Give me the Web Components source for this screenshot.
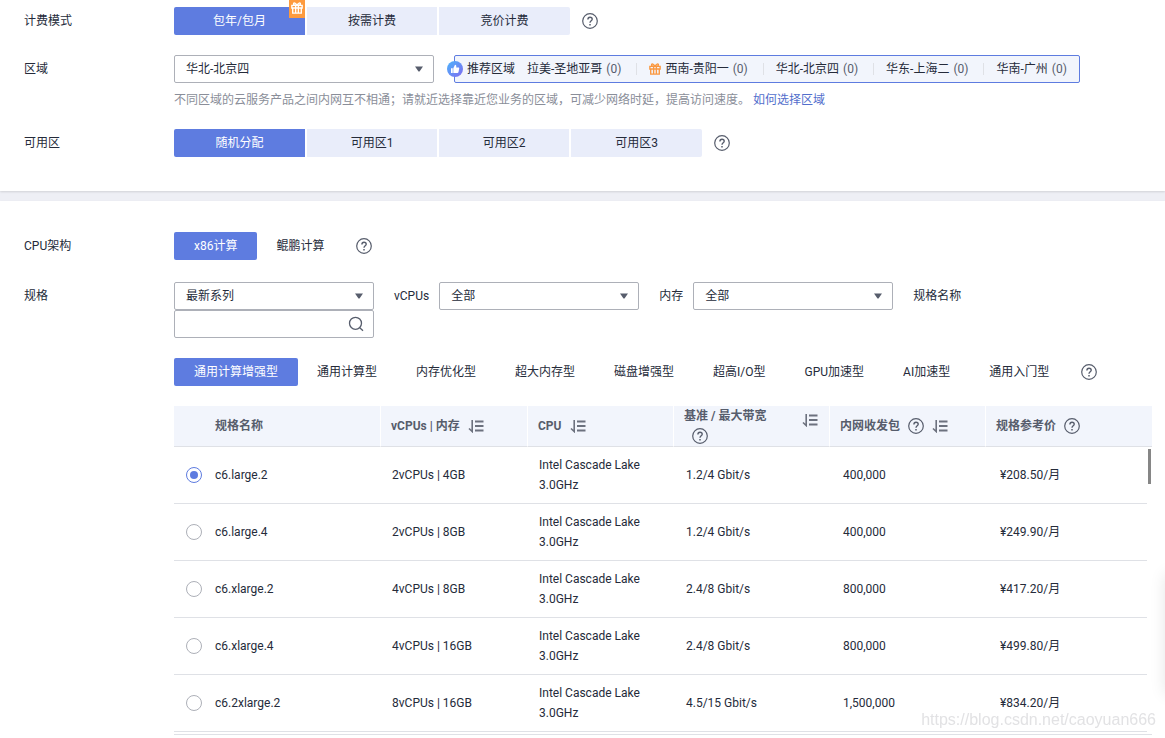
<!DOCTYPE html>
<html lang="zh-CN">
<head>
<meta charset="utf-8">
<meta name="viewport" content="width=device-width, initial-scale=1">
<title>购买弹性云服务器</title>
<style>
    :root {
        --brand: #5e7ce0;
        --text: #252b3a;
        --text-weak: #575d6c;
        --border: #adb0b8;
        --line: #dfe1e6;
        --tint: #f2f5fc;
    }
    body {
        margin: 0;
        background: #eeeff5;
        color: var(--text);
        font: 12px/20px Roboto, "Noto Sans CJK SC", sans-serif;
    }
    .line { display: flex; align-items: center; flex-wrap: wrap; }
    .hint { margin: 8px 0 0; line-height: 18px; color: #8a8e99; }
    .hint a { color: #526ecc; text-decoration: none; }
</style>
</head>
<body>

<page-section class="basic">
    <form-row label="计费模式">
        <div class="line">
            <button-group label="计费模式" items="包年/包月,按需计费,竞价计费" gift></button-group>
            <help-tip></help-tip>
        </div>
    </form-row>
    <form-row label="区域">
        <div class="line" style="gap: 0 20px">
            <select-box name="区域" value="华北-北京四" style="--width: 260px"></select-box>
            <region-bar>
                <region-link count="0">拉美-圣地亚哥</region-link>
                <region-link count="0" gift>西南-贵阳一</region-link>
                <region-link count="0">华北-北京四</region-link>
                <region-link count="0">华东-上海二</region-link>
                <region-link count="0">华南-广州</region-link>
            </region-bar>
        </div>
        <p class="hint">不同区域的云服务产品之间内网互不相通；请就近选择靠近您业务的区域，可减少网络时延，提高访问速度。 <a href="#region">如何选择区域</a></p>
    </form-row>
    <form-row label="可用区">
        <div class="line">
            <button-group label="可用区" items="随机分配,可用区1,可用区2,可用区3"></button-group>
            <help-tip></help-tip>
        </div>
    </form-row>
</page-section>

<page-section class="spec">
    <form-row label="CPU架构">
        <div class="line">
            <tab-group label="CPU架构" items="x86计算,鲲鹏计算"></tab-group>
            <help-tip></help-tip>
        </div>
    </form-row>
    <form-row label="规格">
        <div class="line" style="gap: 0 20px">
            <select-box name="规格" value="最新系列"></select-box>
            <select-box name="vCPUs" value="全部" show-label></select-box>
            <select-box name="内存" value="全部" show-label></select-box>
            <search-box label="规格名称"></search-box>
        </div>
        <div class="line" style="margin: 20px 0">
            <tab-group label="规格类型" items="通用计算增强型,通用计算型,内存优化型,超大内存型,磁盘增强型,超高I/O型,GPU加速型,AI加速型,通用入门型"></tab-group>
            <help-tip></help-tip>
        </div>
        <spec-table></spec-table>
    </form-row>
</page-section>

<side-dock></side-dock>
<water-mark>https://blog.csdn.net/caoyuan666</water-mark>

<script>
const BASE = `
    :host, * { box-sizing: border-box; }
    button, input, select { font: inherit; color: inherit; margin: 0; }
    button { border: 0; background: none; padding: 0; cursor: pointer; white-space: nowrap; }
    svg { display: block; }
`;

const GIFT = `
    <svg viewBox="0 0 14 14" width="12" height="12" fill="none" stroke="currentColor" stroke-width="1.6" aria-hidden="true">
        <path d="M1 4h12v3H1zM2 7v6h10V7M5.4 4v9M8.6 4v9"/>
        <path d="M7 4C5.5 1 3 .2 3 2.2C3 3.5 5 4 7 4C9 4 11 3.5 11 2.2C11 .2 8.5 1 7 4"/>
    </svg>`;

const HELP = `
    <svg viewBox="0 0 16 16" width="16" height="16" fill="none" stroke="#575d6c" stroke-width="1.2" aria-hidden="true">
        <circle cx="8" cy="8" r="7.3"/>
        <path d="M5.9 6.5C5.9 5 6.8 4.2 8 4.2S10.2 5 10.2 6.2C10.2 7.7 8 7.8 8 9.7" stroke-width="1.4"/>
        <path d="M8 10.9v1.5" stroke-width="1.5"/>
    </svg>`;

const SORT = `
    <svg viewBox="0 0 16 14" width="16" height="14" fill="none" stroke="#6c717e" stroke-width="1.8" aria-hidden="true">
        <path d="M4.2 1v11.5L1 9.5" stroke-width="1.6"/>
        <path d="M7 2.5h8.5M7 7h8.5M7 11.5h8.5"/>
    </svg>`;

class PageSection extends HTMLElement {
    constructor() {
        super();
        this.attachShadow({ mode: "open" }).innerHTML = `
            <style>
                ${BASE}
                :host {
                    display: block;
                    background: #fff;
                    box-shadow: 0 1px 2px rgba(0, 0, 0, 0.12);
                    padding: 7px 13px 34px 24px;
                }
                :host(.spec) { margin-top: 10px; padding: 31px 13px 3px 24px; }
                section { display: flex; flex-direction: column; gap: 20px; }
                :host(.spec) section { gap: 22px; }
            </style>
            <section><slot></slot></section>
        `;
    }
}

class FormRow extends HTMLElement {
    connectedCallback() {
        if (this.shadowRoot) return;
        this.attachShadow({ mode: "open" }).innerHTML = `
            <style>
                ${BASE}
                :host { display: flex; align-items: flex-start; }
                .label { flex: 0 0 150px; line-height: 28px; }
                .content { flex: 1; min-width: 0; }
            </style>
            <span class="label">${this.getAttribute("label")}</span>
            <div class="content"><slot></slot></div>
        `;
    }
}

class HelpTip extends HTMLElement {
    constructor() {
        super();
        this.attachShadow({ mode: "open" }).innerHTML = `
            <style>
                ${BASE}
                :host { display: inline-block; margin-left: 12px; }
                button { display: block; }
            </style>
            <button type="button" aria-label="帮助">${HELP}</button>
        `;
    }
}

// Row of choices where exactly one is pressed
class ChoiceGroup extends HTMLElement {
    connectedCallback() {
        if (this.shadowRoot) return;
        const gift = this.hasAttribute("gift") ? `<i>${GIFT}</i>` : "";
        const buttons = this.getAttribute("items").split(",").map((item, i) =>
            `<button type="button" aria-pressed="${i === 0}">${item}${i === 0 ? gift : ""}</button>`
        ).join("");

        this.attachShadow({ mode: "open" }).innerHTML = `
            <style>${BASE}${this.css()}</style>
            <div role="group" aria-label="${this.getAttribute("label")}">${buttons}</div>
        `;
        this.shadowRoot.addEventListener("click", (e) => this.select(e.target.closest("button")));
    }
    select(button) {
        if (!button) return;
        this.shadowRoot.querySelectorAll("button").forEach((b) => {
            b.setAttribute("aria-pressed", b === button);
        });
    }
}

class ButtonGroup extends ChoiceGroup {
    css() {
        return `
            :host { display: block; }
            div { display: flex; gap: 2px; }
            button {
                position: relative;
                width: 130px;
                height: 28px;
                background: #e9edfa;
            }
            button:first-child { width: 131px; border-radius: 2px 0 0 2px; }
            button:last-child { width: 131px; border-radius: 0 2px 2px 0; }
            button[aria-pressed="true"] { background: var(--brand); color: #fff; }
            i {
                position: absolute;
                top: -9px;
                right: 0;
                display: flex;
                align-items: center;
                justify-content: center;
                width: 16px;
                height: 20px;
                background: #fe9b3f;
                color: #fff;
            }
        `;
    }
}

class TabGroup extends ChoiceGroup {
    css() {
        return `
            :host { display: block; }
            div { display: flex; flex-wrap: wrap; }
            button { height: 28px; padding: 0 20px; border-radius: 2px; }
            button + button { margin-left: -1px; }
            button[aria-pressed="true"] { background: var(--brand); color: #fff; }
        `;
    }
}

class SelectBox extends HTMLElement {
    connectedCallback() {
        if (this.shadowRoot) return;
        const name = this.getAttribute("name");
        const shown = this.hasAttribute("show-label");
        this.attachShadow({ mode: "open" }).innerHTML = `
            <style>
                ${BASE}
                :host { display: flex; align-items: center; gap: 10px; }
                .box { display: grid; align-items: center; width: var(--width, 200px); }
                select, svg { grid-area: 1 / 1; }
                select {
                    appearance: none;
                    width: 100%;
                    height: 28px;
                    padding: 0 28px 0 11px;
                    border: 1px solid var(--border);
                    border-radius: 2px;
                    background: #fff;
                }
                svg { justify-self: end; margin-right: 10px; pointer-events: none; }
            </style>
            ${shown ? `<label for="field">${name}</label>` : ""}
            <div class="box">
                <select id="field" ${shown ? "" : `aria-label="${name}"`}>
                    <option>${this.getAttribute("value")}</option>
                </select>
                <svg viewBox="0 0 10 6" width="10" height="6" aria-hidden="true"><path d="M1 .5h8L5.5 5.5h-1z" fill="#575d6c"/></svg>
            </div>
        `;
    }
}

class SearchBox extends HTMLElement {
    connectedCallback() {
        if (this.shadowRoot) return;
        this.attachShadow({ mode: "open" }).innerHTML = `
            <style>
                ${BASE}
                :host { display: contents; }
                .box { display: flex; align-items: center; width: 200px; height: 28px; border: 1px solid var(--border); border-radius: 2px; }
                input { flex: 1; min-width: 0; height: 26px; padding: 0 11px; border: 0; outline: 0; background: none; }
                button { margin-right: 9px; }
            </style>
            <label for="field">${this.getAttribute("label")}</label>
            <div class="box">
                <input id="field" type="text">
                <button type="button" aria-label="搜索">
                    <svg viewBox="0 0 16 16" width="16" height="16" fill="none" stroke="#575d6c" stroke-width="1.3">
                        <circle cx="7.5" cy="7.3" r="6"/>
                        <path d="M11.5 11.5l3.5 3.3"/>
                    </svg>
                </button>
            </div>
        `;
    }
}

class RegionBar extends HTMLElement {
    constructor() {
        super();
        this.attachShadow({ mode: "open" }).innerHTML = `
            <style>
                ${BASE}
                :host {
                    position: relative;
                    display: flex;
                    align-items: center;
                    height: 28px;
                    padding: 0 12px;
                    border: 1px solid var(--brand);
                    border-radius: 2px;
                    background: var(--tint);
                    white-space: nowrap;
                }
                .thumb { position: absolute; left: -8px; }
                .title { margin-right: 12px; }
            </style>
            <svg class="thumb" viewBox="0 0 16 16" width="16" height="16" aria-hidden="true">
                <defs>
                    <linearGradient id="g" x1="0" y1="0" x2="1" y2="1">
                        <stop offset="0" stop-color="#4cb4fb"/>
                        <stop offset="1" stop-color="#7f6bf0"/>
                    </linearGradient>
                </defs>
                <circle cx="8" cy="8" r="8" fill="url(#g)"/>
                <path d="M4 7.2h1.7v4.8H4zM6.3 7.2L8 3.8c1.2 0 1.5 1 1.2 2.6h2.1c.8 0 1 .5.9 1.1l-.7 3.6c-.1.6-.5.9-1.1.9H6.3z" fill="#fff"/>
            </svg>
            <span class="title">推荐区域</span>
            <slot></slot>
        `;
    }
}

class RegionLink extends HTMLElement {
    connectedCallback() {
        if (this.shadowRoot) return;
        this.attachShadow({ mode: "open" }).innerHTML = `
            <style>
                ${BASE}
                :host { display: flex; align-items: center; }
                :host(:not(:last-child))::after {
                    content: "";
                    width: 1px;
                    height: 12px;
                    margin: 0 12px 0 15px;
                    background: var(--line);
                }
                button { display: flex; align-items: center; gap: 4px; }
                svg { color: #fa9841; }
                .count { color: var(--text-weak); }
            </style>
            <button type="button">
                ${this.hasAttribute("gift") ? GIFT : ""}
                <span><slot></slot></span>
                <span class="count">(${this.getAttribute("count")})</span>
            </button>
        `;
    }
}

class SpecTable extends HTMLElement {
    constructor() {
        super();
        this.attachShadow({ mode: "open" });
        this._rows = [
            ["c6.large.2", "2vCPUs | 4GB", "Intel Cascade Lake 3.0GHz", "1.2/4 Gbit/s", "400,000", "¥208.50/月"],
            ["c6.large.4", "2vCPUs | 8GB", "Intel Cascade Lake 3.0GHz", "1.2/4 Gbit/s", "400,000", "¥249.90/月"],
            ["c6.xlarge.2", "4vCPUs | 8GB", "Intel Cascade Lake 3.0GHz", "2.4/8 Gbit/s", "800,000", "¥417.20/月"],
            ["c6.xlarge.4", "4vCPUs | 16GB", "Intel Cascade Lake 3.0GHz", "2.4/8 Gbit/s", "800,000", "¥499.80/月"],
            ["c6.2xlarge.2", "8vCPUs | 16GB", "Intel Cascade Lake 3.0GHz", "4.5/15 Gbit/s", "1,500,000", "¥834.20/月"]
        ];
    }
    connectedCallback() {
        this.render();
    }

    row(cells, i) {
        const [name, ...rest] = cells;
        return `
            <tr>
                <td class="pick"><input type="radio" name="spec" id="spec${i}" ${i === 0 ? "checked" : ""}></td>
                <td class="name"><label for="spec${i}">${name}</label></td>
                ${rest.map((cell) => `<td>${cell}</td>`).join("")}
                ${i === 0 ? `<td class="track" rowspan="${this._rows.length}"><div class="bar"></div></td>` : ""}
            </tr>`;
    }

    render() {
        const help = `<button type="button" class="help" aria-label="帮助">${HELP}</button>`;
        const sort = `<button type="button" class="sort" aria-label="排序">${SORT}</button>`;
        this.shadowRoot.innerHTML = `
            <style>
                ${BASE}
                :host { display: block; padding-bottom: 2px; border-bottom: 1px solid var(--line); }
                table { width: 100%; table-layout: fixed; border-collapse: separate; border-spacing: 0; }
                th {
                    height: 41px;
                    padding: 0 11px 0 10px;
                    background: var(--tint);
                    border-bottom: 1px solid var(--line);
                    border-right: 1px solid #fff;
                    color: var(--text-weak);
                    font-weight: bold;
                    text-align: left;
                    white-space: nowrap;
                }
                th:first-child { padding-left: 41px; }
                th:last-child { padding-right: 0; border-right: 0; }
                th div { display: flex; align-items: center; gap: 8px; }
                th div.split { justify-content: space-between; align-items: flex-start; }
                .split > span { display: flex; flex-direction: column; }
                .split .help { display: flex; align-items: center; height: 20px; margin-left: 8px; }
                .split .sort { margin-top: 7px; }
                td {
                    height: 57px;
                    padding: 8px 0 8px 11px;
                    border-bottom: 1px solid var(--line);
                }
                td.pick { padding-left: 12px; }
                td.name { padding-left: 10px; }
                td:nth-child(n+5) { padding-left: 12px; }
                td:nth-child(n+6) { padding-left: 13px; }
                td:nth-child(n+7) { padding-left: 14px; }
                input {
                    appearance: none;
                    display: grid;
                    place-items: center;
                    width: 16px;
                    height: 16px;
                    border: 1px solid var(--border);
                    border-radius: 50%;
                }
                input:checked { border-color: var(--brand); }
                input:checked::before {
                    content: "";
                    width: 8px;
                    height: 8px;
                    border-radius: 50%;
                    background: var(--brand);
                }
                td.track { padding: 2px 1px; border: 0; vertical-align: top; }
                .bar { height: 35px; background: #868686; }
            </style>
            <table>
                <colgroup>
                    <col style="width: 31px"><col style="width: 176px"><col style="width: 147px">
                    <col style="width: 146px"><col style="width: 156px"><col style="width: 156px">
                    <col style="width: 161px"><col style="width: 5px">
                </colgroup>
                <thead>
                    <tr>
                        <th colspan="2">规格名称</th>
                        <th><div>vCPUs | 内存 ${sort}</div></th>
                        <th><div>CPU ${sort}</div></th>
                        <th><div class="split"><span>基准 / 最大带宽 ${help}</span>${sort}</div></th>
                        <th><div>内网收发包 ${help}${sort}</div></th>
                        <th colspan="2"><div>规格参考价 ${help}</div></th>
                    </tr>
                </thead>
                <tbody>${this._rows.map((cells, i) => this.row(cells, i)).join("")}</tbody>
            </table>
        `;
    }
}

// Floating dock, parked past the right edge so only its shadow shows
class SideDock extends HTMLElement {
    constructor() {
        super();
        this.attachShadow({ mode: "open" }).innerHTML = `
            <style>
                :host {
                    position: fixed;
                    right: -40px;
                    bottom: 44px;
                    width: 40px;
                    height: 120px;
                    box-shadow: 0 0 16px rgba(0, 0, 0, 0.1);
                }
            </style>
        `;
    }
}

class WaterMark extends HTMLElement {
    constructor() {
        super();
        this.attachShadow({ mode: "open" }).innerHTML = `
            <style>
                :host {
                    position: fixed;
                    right: 9px;
                    bottom: 8px;
                    font: 16px/20px "Liberation Sans", sans-serif;
                    color: #e2e2e4;
                    pointer-events: none;
                }
            </style>
            <slot></slot>
        `;
    }
}

customElements.define("page-section", PageSection);
customElements.define("form-row", FormRow);
customElements.define("help-tip", HelpTip);
customElements.define("button-group", ButtonGroup);
customElements.define("tab-group", TabGroup);
customElements.define("select-box", SelectBox);
customElements.define("search-box", SearchBox);
customElements.define("region-bar", RegionBar);
customElements.define("region-link", RegionLink);
customElements.define("spec-table", SpecTable);
customElements.define("side-dock", SideDock);
customElements.define("water-mark", WaterMark);
</script>
</body>
</html>
